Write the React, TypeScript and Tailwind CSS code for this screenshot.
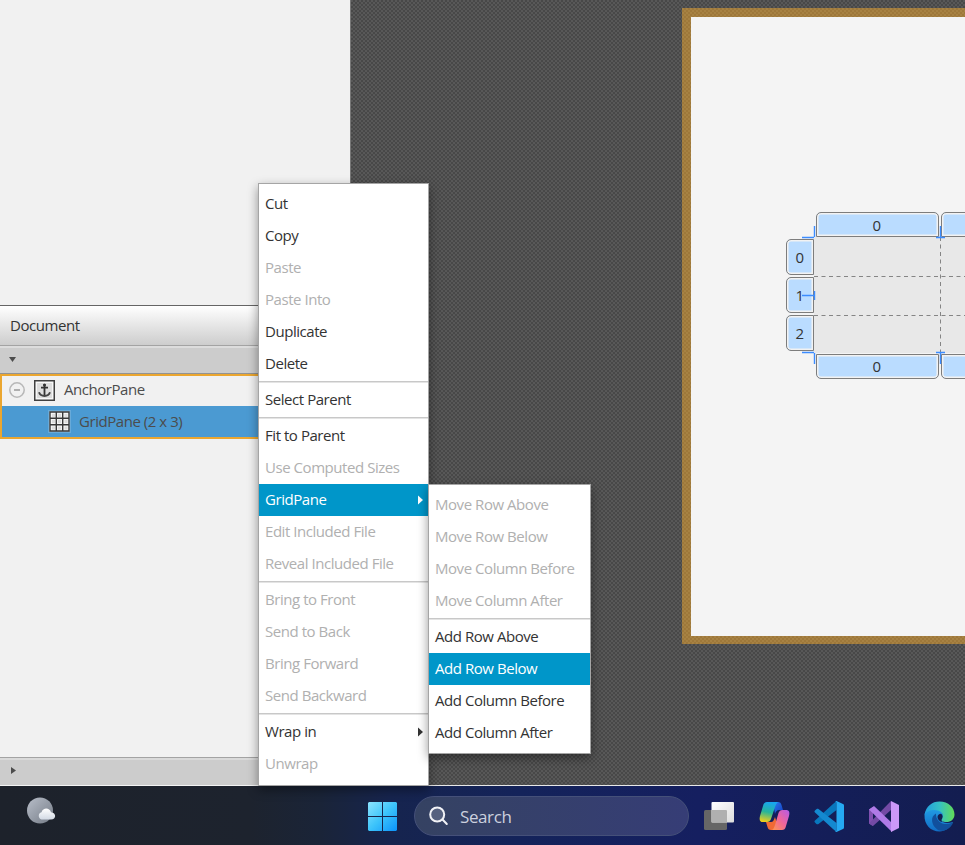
import React from 'react';

type Item = { label: string; off?: boolean; sub?: boolean; active?: boolean } | null;

const mainItems: Item[] = [
  { label: 'Cut' },
  { label: 'Copy' },
  { label: 'Paste', off: true },
  { label: 'Paste Into', off: true },
  { label: 'Duplicate' },
  { label: 'Delete' },
  null,
  { label: 'Select Parent' },
  null,
  { label: 'Fit to Parent' },
  { label: 'Use Computed Sizes', off: true },
  { label: 'GridPane', sub: true, active: true },
  { label: 'Edit Included File', off: true },
  { label: 'Reveal Included File', off: true },
  null,
  { label: 'Bring to Front', off: true },
  { label: 'Send to Back', off: true },
  { label: 'Bring Forward', off: true },
  { label: 'Send Backward', off: true },
  null,
  { label: 'Wrap in', sub: true },
  { label: 'Unwrap', off: true },
];

const subItems: Item[] = [
  { label: 'Move Row Above', off: true },
  { label: 'Move Row Below', off: true },
  { label: 'Move Column Before', off: true },
  { label: 'Move Column After', off: true },
  null,
  { label: 'Add Row Above' },
  { label: 'Add Row Below', active: true },
  { label: 'Add Column Before' },
  { label: 'Add Column After' },
];

function Menu({ items, className }: { items: Item[]; className: string }) {
  return (
    <div className={`absolute border border-[#a5a5a5] bg-white pt-1 shadow-[0_4px_10px_rgba(0,0,0,0.4)] ${className}`}>
      {items.map((it, i) =>
        it === null ? (
          <div key={i} className="h-1 pt-px">
            <div className="h-px bg-[#c8c8c8]" />
            <div className="h-px bg-[#e4e4e4]" />
          </div>
        ) : (
          <div
            key={i}
            className={`flex h-8 items-center justify-between pr-[5px] pl-1.5 ${
              it.active ? 'bg-[#0096c9] text-white' : it.off ? 'text-[#b0b0b0]' : 'text-[#333333]'
            }`}
          >
            <span className="pb-0.5 whitespace-nowrap">{it.label}</span>
            {it.sub && (
              <svg width="5" height="10" viewBox="0 0 5 10" fill="currentColor">
                <path d="M0 0.5 5 5 0 9.5z" />
              </svg>
            )}
          </div>
        ),
      )}
    </div>
  );
}

function DocumentPanel() {
  return (
    <aside className="flex w-[350px] shrink-0 flex-col bg-[#f1f1f1] text-[#333333]">
      <div className="h-[305px]" />
      <div className="flex h-[41px] items-center border-t border-b border-t-[#656565] border-b-[#a3a3a3] bg-linear-to-b from-white to-[#cdcdcd] pl-2.5">
        Document
      </div>
      <div className="flex h-7 items-center border-t-2 border-b border-t-[#dcdcdc] border-b-[#929292] bg-[#cccccc] pl-[9px]">
        <svg className="mb-[3px]" width="7" height="5" viewBox="0 0 7 5" fill="#4c4c4c">
          <path d="M0 0h7L3.500 5z" />
        </svg>
      </div>
      <div className="flex h-[65px] flex-col border-2 border-[#eba62f] text-[#4c4c4c]">
        <div className="flex h-[30px] items-center pb-[3px] pl-[7px]">
          <svg width="16" height="16" viewBox="0 0 16 16" fill="none" stroke="#b8b8b8">
            <circle cx="8" cy="8" r="7.200" strokeWidth="1.500" />
            <path d="M5 8h6" stroke="#a8a8a8" strokeWidth="1.800" />
          </svg>
          <svg className="mt-px ml-[9px]" width="21" height="21" viewBox="0 0 21 21">
            <rect x="0.750" y="0.750" width="19.500" height="19.500" fill="#f8f8f8" stroke="#404040" strokeWidth="1.500" />
            <rect x="3" y="3" width="15" height="15" fill="#dedede" />
            <path d="M10.500 4v12M7 7.700h7" fill="none" stroke="#333" strokeWidth="1.800" />
            <path d="M5 12.300c1 3 3 3.700 5.500 3.700s4.500-.7 5.500-3.700" fill="none" stroke="#444" strokeWidth="1.900" />
            <circle cx="10.500" cy="5" r="1.500" fill="#333" />
          </svg>
          <span className="ml-[9px]">AnchorPane</span>
        </div>
        <div className="flex grow items-center bg-[#4b9ad2] pl-[46px]">
          <svg width="23" height="23" viewBox="0 0 23 23">
            <rect width="23" height="23" fill="#68aad9" />
            <rect x="1.500" y="1.500" width="20" height="20" fill="#f4f4f4" />
            <g fill="#dddddd">
              {[4, 10, 16.500].map((y) => [4, 10, 16.500].map((x) => <rect key={`${x}-${y}`} x={x} y={y} width="3" height="3" />))}
            </g>
            <path d="M2 2h19v19H2zM8.300 2v19M14.700 2v19M2 8.300h19M2 14.700h19" fill="none" stroke="#383838" strokeWidth="1.400" />
          </svg>
          <span className="ml-[8px]">GridPane (2 x 3)</span>
        </div>
      </div>
      <div className="grow" />
      <div className="flex h-7 items-center border-t border-[#a3a3a3] bg-[#cccccc] pb-[3px] pl-[11px] shadow-[inset_0_2px_0_#dadada]">
        <svg width="5" height="7" viewBox="0 0 5 7" fill="#4c4c4c">
          <path d="M0 0v7l5-3.500z" />
        </svg>
      </div>
      <div className="h-px bg-[#f4f4f4]" />
    </aside>
  );
}

function ColumnTab({ label, className }: { label?: string; className: string }) {
  return (
    <div className={`flex h-[25px] w-[123px] shrink-0 items-center justify-center border border-[#7d7d7d] bg-[#badcff] pr-0.5 shadow-[inset_0_0_0_1.500px_#f2f2f2] ${className}`}>
      {label}
    </div>
  );
}

function GridEditor() {
  return (
    <div className="relative mt-[195px] ml-[95px] flex w-[300px] flex-col text-[#333333]">
      <div className="flex gap-0.5 pl-[30px]">
        <ColumnTab label="0" className="rounded-t-[5px] pt-px" />
        <ColumnTab className="rounded-t-[5px]" />
      </div>
      <div className="flex h-[116px]">
        <div className="flex w-7 flex-col gap-0.5 pt-[2px]">
          {['0', '1', '2'].map((n) => (
            <div key={n} className="flex h-9 items-center justify-center rounded-l-[5px] border border-[#7d7d7d] bg-[#badcff] pr-px shadow-[inset_0_0_0_1.500px_#f2f2f2]">
              {n}
            </div>
          ))}
        </div>
        <div className="grow bg-[#e8e8e8]" />
      </div>
      <div className="flex gap-0.5 pt-px pl-[30px]">
        <ColumnTab label="0" className="rounded-b-[5px]" />
        <ColumnTab className="rounded-b-[5px]" />
      </div>
      <svg className="absolute top-0 left-0" width="300" height="170" viewBox="0 0 300 170" fill="none">
        <path d="M28 64.500h272M28 103.500h272M154.500 25v116" stroke="#858585" strokeDasharray="4 3.500" />
        <path d="M16 25.500h12M28.500 14v11M154.500 14v11M150 25.500h9M16 83.500h12M28.500 79v9M16 140.500h12M28.500 141v11M154.500 141v11M150 140.500h9" stroke="#3b8cff" strokeWidth="1.400" />
      </svg>
    </div>
  );
}

function Taskbar() {
  return (
    <footer className="flex h-[59px] items-center bg-[linear-gradient(90deg,#1d222b_0px,#1d232e_250px,#1a2438_320px,#16244e_390px,#14235a_520px,#151f60_700px,#131d50_965px)] pt-px">
      <svg className="mb-[11px] ml-[26px]" width="30" height="28" viewBox="0 0 30 28">
        <defs>
          <linearGradient id="moon" x1="0" y1="0" x2="1" y2="1"><stop stopColor="#b8bec9" /><stop offset="1" stopColor="#747b86" /></linearGradient>
          <linearGradient id="cloud" x1="0" y1="0" x2="0" y2="1"><stop stopColor="#fff" /><stop offset="1" stopColor="#d2d9e4" /></linearGradient>
        </defs>
        <circle cx="14" cy="13.500" r="13" fill="url(#moon)" />
        <path d="M15.500 22.500a3.800 3.800 0 0 1 0-7.300c1.500-5 8-5 9.500 0 5.500.5 5.500 7.300 0 7.300z" fill="url(#cloud)" />
      </svg>
      <svg className="ml-[312px]" width="29" height="29" viewBox="0 0 29 29">
        <defs>
          <linearGradient id="win" x1="0" y1="0" x2="29" y2="29" gradientUnits="userSpaceOnUse"><stop stopColor="#8ce4ff" /><stop offset=".5" stopColor="#3dc4fa" /><stop offset="1" stopColor="#0b93fb" /></linearGradient>
        </defs>
        <path d="M1 0h13v14H0V1zM15 0h13l1 1v13H15zM0 15h14v14H1l-1-1zM15 15h14v13l-1 1H15z" fill="url(#win)" />
      </svg>
      <div className="ml-[17px] flex h-10 w-[275px] items-center rounded-full border border-[#455079] bg-linear-to-r from-[#354262] to-[#363d76] pl-[14px] text-[17px] tracking-[-0.4px] text-[#ccd0de]">
        <svg className="-mt-px" width="20" height="20" viewBox="0 0 20 20" fill="none" stroke="#f1f2f6" strokeWidth="2">
          <circle cx="8.200" cy="8.500" r="7" fill="#56617f" />
          <path d="M13.500 13.500l4.300 4.500" strokeLinecap="round" />
        </svg>
        <span className="mt-px ml-[11px]">Search</span>
      </div>
      <svg className="ml-[15px]" width="30" height="28" viewBox="0 0 30 28">
        <defs><linearGradient id="tv" x1="0" y1="0" x2="1" y2="1"><stop stopColor="#fff" /><stop offset="1" stopColor="#dcdcdc" /></linearGradient></defs>
        <rect x="0" y="8" width="23" height="20" rx="1.500" fill="#666" />
        <rect x="7.500" y="0" width="22.500" height="20.500" rx="1" fill="url(#tv)" />
        <path d="M7.500 8H22a1 1 0 0 1 1 1v11.500H7.500z" fill="#b0b0b0" />
      </svg>
      <svg className="ml-[25px]" width="31" height="28" viewBox="0 0 31 28">
        <defs>
          <linearGradient id="cpA" x1=".5" y1="0" x2=".3" y2="1"><stop stopColor="#18a5f0" /><stop offset=".5" stopColor="#26b59a" /><stop offset="1" stopColor="#f2cf18" /></linearGradient>
          <linearGradient id="cpB" x1="1" y1="0" x2="0" y2="1"><stop stopColor="#b45be8" /><stop offset=".5" stopColor="#f0669a" /><stop offset="1" stopColor="#ff9a4a" /></linearGradient>
          <linearGradient id="cpC" x1="0" y1="0" x2="1" y2="1"><stop stopColor="#2b7df0" /><stop offset="1" stopColor="#123cc0" /></linearGradient>
        </defs>
        <path d="M14 0h5c2 0 3 1 3.500 3L24 8h-4c-2 0-3 1-4 4z" fill="url(#cpC)" />
        <path d="M7 20h5c2 0 3-2 4-5l3 10-3 3h-4c-2 0-3-1-3.500-3z" fill="#f06a35" />
        <path d="M8 0h12c-2 0-3 2-4 5l-4 12c-.7 2-2 3-4 3H4c-3 0-4-2-3-6L4 4c.7-3 2-4 4-4z" fill="url(#cpA)" />
        <path d="M23 28H12c2 0 3-2 4-5l3.500-12c.7-2 2-3 4-3H27c3 0 4 2 3 6l-3 10c-.7 3-2 4-4 4z" fill="url(#cpB)" />
      </svg>
      <svg className="ml-[24px]" width="31" height="31" viewBox="0 0 31 31">
        <path d="M1 19.500 19 3l3.500-3v9L4.500 23c-1 .7-2 .3-3.500-1.500-.7-.7-.7-1.300 0-2z" fill="#0877bd" />
        <path d="M1 11.500 19 28l3.500 3v-9L4.500 8C3.500 7.300 2.500 7.700 1 9.500c-.7.700-.7 1.300 0 2z" fill="#1489d0" />
        <path d="M22.500 0 29 3c.7.300 1 .8 1 1.500v22c0 .7-.3 1.200-1 1.500l-6.500 3c-.8.200-1.500 0-2-.5 1 .5 2 0 2-1.500V2c0-1.500-1-2-2-1.500.5-.5 1.200-.7 2-.5z" fill="#25a9f2" />
      </svg>
      <svg className="ml-[24px]" width="31" height="31" viewBox="0 0 31 31">
        <path d="M0 8.500 4 6v19l-4-2.500z" fill="#8050b0" />
        <path d="M4 25 22 9V0L0 22.500z" fill="#734aa5" />
        <path d="M0 8.500 5 5l18 17v9z" fill="#af7ae6" />
        <path d="M22 0l8 4v23l-8 4z" fill="#cb98f8" />
      </svg>
      <svg className="ml-[24px]" width="31" height="31" viewBox="0 0 31 31">
        <defs>
          <linearGradient id="edA" x1="0" y1=".5" x2="1" y2=".5"><stop stopColor="#229de0" /><stop offset=".5" stopColor="#35c1c4" /><stop offset="1" stopColor="#61db55" /></linearGradient>
          <linearGradient id="edB" x1="0" y1="0" x2="0" y2="1"><stop stopColor="#219ce5" /><stop offset="1" stopColor="#116cc4" /></linearGradient>
        </defs>
        <path d="M.5 14C1 9 7 7 12 8c4 .7 7 3 7 6 0 2-1 4-1 5 0 3 5 4 11 2C26 27 21 30.500 15.500 30.500 7 30.500 0 24 .5 14z" fill="url(#edB)" />
        <path d="M12 12.500c-6 3-5 12 2 16.500 5 2 11 0 14.500-6 .5-1-.3-1.500-1-1-3.500 1.500-8 1.500-11-.5-4-3-4.500-6-4.500-9z" fill="#11509d" />
        <path d="M17 12.800c2 1.200 2 3.500 1 5.200-.5 1-.5 2 .5 3-3-.3-5-2.500-5-5 0-1.700 1.500-3 3.500-3.200z" fill="#131e50" />
        <path d="M.5 14C2 5 8 .5 15.500.5c9 0 15 6 15 13 0 5-4 7.500-8 7.500-4 0-6-1-4-4 2-4-2-8-8-8-5 0-8.500 2-10 5z" fill="url(#edA)" />
      </svg>
    </footer>
  );
}

export default function App() {
  return (
    <div className="relative flex h-[845px] w-[965px] flex-col overflow-hidden font-['Open_Sans','Noto_Sans',sans-serif] text-[15px] tracking-[-0.45px]">
      <main className="flex h-[786px]">
        <DocumentPanel />
        <section className="grow overflow-hidden border-b border-l border-b-[#e8e8e8] border-l-[#777] bg-[#4d4d4d] bg-[repeating-conic-gradient(#484848_0_25%,#585858_0_50%)] bg-size-[4px_4px] pt-2 pl-[331px]">
          <div className="h-[636px] w-[320px] bg-[#a37d3e] bg-[repeating-conic-gradient(#9e783a_0_25%,#a78243_0_50%)] bg-size-[4px_4px] pt-[9px] pb-2 pl-[9px]">
            <div className="flex h-full bg-[#f4f4f4]">
              <GridEditor />
            </div>
          </div>
        </section>
      </main>
      <Taskbar />
      <Menu items={mainItems} className="top-[183px] left-[258px] w-[171px] pb-[5px]" />
      <Menu items={subItems} className="top-[484px] left-[428px] w-[163px] pb-1" />
    </div>
  );
}
